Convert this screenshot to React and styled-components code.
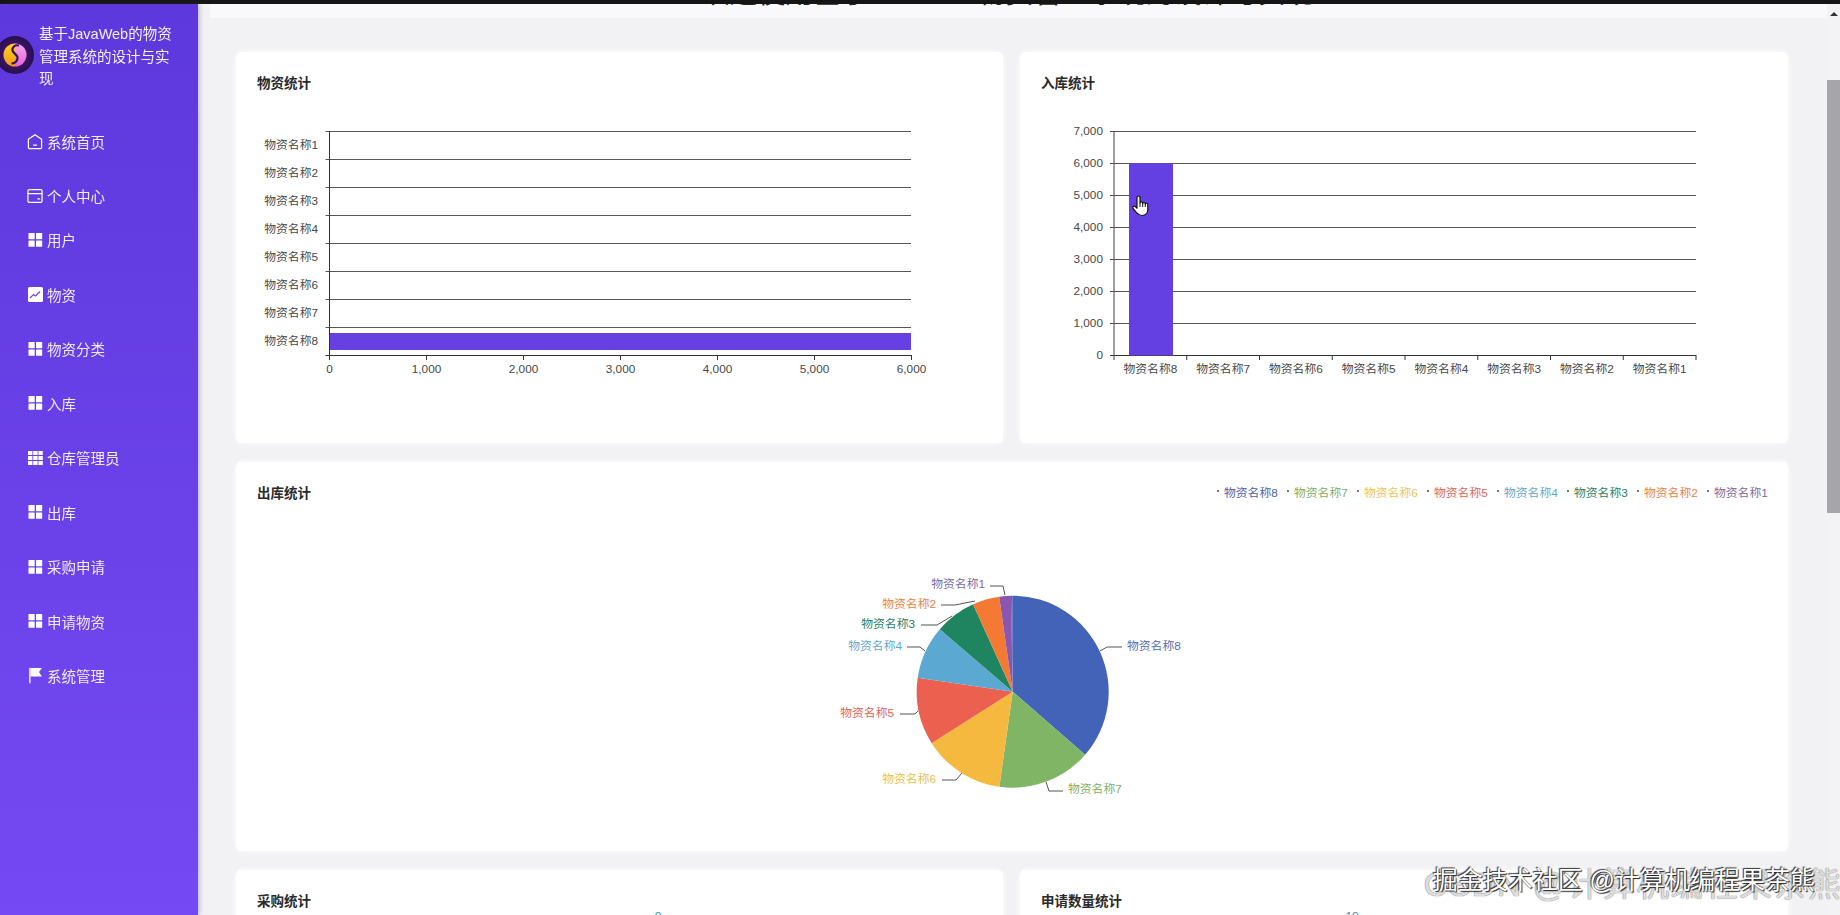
import React from "react";
import styled, { createGlobalStyle } from "styled-components";

const Global = createGlobalStyle`
  html, body { margin: 0; padding: 0; height: 100%; overflow: hidden; background: #f2f2f5; }
  body { font-family: "Liberation Sans", "Noto Sans CJK SC", sans-serif; }
  #root { height: 100%; }
  svg text { font-family: "Liberation Sans", "Noto Sans CJK SC", sans-serif; }
`;

const Page = styled.div`
  width: 1840px;
  height: 915px;
  overflow: hidden;
  display: flex;
  flex-direction: column;
  position: relative;
  filter: blur(0.45px);
`;
const TopEdge = styled.div`
  height: 4px;
  flex: none;
  background: #151515;
`;
const Body = styled.div`
  flex: 1;
  min-height: 0;
  display: flex;
`;
const Sidebar = styled.aside`
  width: 198px;
  flex: none;
  background: linear-gradient(180deg, #5d38dc 0%, #7549f3 100%);
  box-shadow: 2px 0 4px rgba(80, 80, 110, 0.3);
  position: relative;
  z-index: 1;
`;
const Brand = styled.div`
  display: flex;
  align-items: center;
  gap: 5px;
  height: 110px;
  margin-left: -4px;
  padding-bottom: 4px;
  box-sizing: border-box;
`;
const LogoSvg = styled.svg`
  flex: none;
  margin-bottom: 4px;
`;
const BrandTitle = styled.div`
  width: 138px;
  color: #f4efff;
  font-size: 14.5px;
  line-height: 22.5px;
`;
const Menu = styled.nav`
  display: flex;
  flex-direction: column;
`;
const MenuItem = styled.div`
  display: flex;
  align-items: center;
  gap: 4px;
  height: 54.5px;
  padding-left: 27px;
  margin-bottom: ${(p) => (p.$pull ? "-10.5px" : "0")};
  color: #f1ebff;
  font-size: 14.5px;
  flex: none;
`;
const IconSlot = styled.span`
  width: 16px;
  height: 17px;
  display: flex;
  align-items: center;
  justify-content: center;
  flex: none;
`;
const Main = styled.main`
  flex: 1;
  min-width: 0;
  display: flex;
  flex-direction: column;
  background: #f2f2f5;
  overflow: hidden;
`;
const Banner = styled.header`
  height: 14px;
  margin-left: 12px;
  flex: none;
  overflow: hidden;
  background: #f9f9fb;
  display: flex;
  justify-content: center;
  gap: 108px;
  padding-right: 22px;
  color: #222;
  font-size: 28px;
  line-height: 28px;
`;
const BannerText = styled.span`
  margin-top: -24px;
  height: 28px;
  white-space: nowrap;
`;
const Content = styled.div`
  display: grid;
  grid-template-columns: 767px 768px;
  grid-template-rows: 391px 389px 60px;
  column-gap: 17px;
  row-gap: 19px;
  padding: 34px 0 0 38px;
`;
const Card = styled.section`
  background: #fff;
  border-radius: 6px;
  box-shadow: 0 0 5px 1px rgba(252, 252, 253, 0.9);
  position: relative;
  overflow: hidden;
  grid-column: ${(p) => (p.$wide ? "1 / span 2" : "auto")};
`;
const CardHead = styled.div`
  display: flex;
  justify-content: space-between;
  align-items: center;
  padding: 24px 11px 0 21px;
  height: 16px;
`;
const CardTitle = styled.h3`
  margin: 0;
  font-size: 13.5px;
  font-weight: 700;
  color: #2a2a2a;
  line-height: 16px;
`;
const Legend = styled.div`
  display: flex;
  margin-top: -6px;
`;
const LegendItem = styled.span`
  display: flex;
  align-items: center;
  gap: 5px;
  width: 70px;
  font-size: 11.8px;
  color: ${(p) => p.$color};
  white-space: nowrap;
  &::before {
    content: "";
    width: 2px;
    height: 2px;
    border-radius: 50%;
    background: #444;
  }
`;
const ChartSvg = styled.svg`
  position: absolute;
  left: 0;
  top: 0;
  width: 100%;
  height: 100%;
  overflow: visible;
`;
const Scrollbar = styled.div`
  width: 13px;
  flex: none;
  background: #f3f3f5;
  display: flex;
  flex-direction: column;
  align-items: center;
  padding-top: 8px;
  box-sizing: border-box;
`;
const ScrollArrow = styled.div`
  width: 0;
  height: 0;
  flex: none;
  border-left: 4px solid transparent;
  border-right: 4px solid transparent;
  border-bottom: 4px solid #333;
  margin-bottom: 64px;
`;
const Thumb = styled.div`
  width: 100%;
  height: 433px;
  flex: none;
  background: #a6a5a9;
`;
const Watermark = styled.div`
  position: absolute;
  right: 0;
  bottom: 0;
  width: 560px;
  height: 60px;
  pointer-events: none;
  z-index: 3;
`;
const WaterBack = styled.div`
  position: absolute;
  right: -2px;
  top: 13px;
  font-size: 33px;
  line-height: 34px;
  letter-spacing: 1.3px;
  white-space: nowrap;
  color: rgba(255, 255, 255, 0.75);
  text-shadow: 0 0 1px #777, 0 0 1px #888;
`;
const WaterFront = styled.div`
  position: absolute;
  right: 25px;
  top: 10px;
  font-size: 25px;
  line-height: 30px;
  white-space: nowrap;
  color: #fff;
  text-shadow: 1px 1px 1px #222, -1px -1px 1px #333;
`;

const names = [8, 7, 6, 5, 4, 3, 2, 1].map((n) => `物资名称${n}`);
const axis = "#333";
const labelFill = "#484848";

const LogoMark = () => (
  <LogoSvg width="38" height="38" viewBox="0 0 38 38">
    <defs>
      <linearGradient id="lgY" x1="0" y1="0" x2="0" y2="1">
        <stop offset="0" stopColor="#ffd21f" />
        <stop offset="1" stopColor="#f59b1a" />
      </linearGradient>
      <linearGradient id="lgP" x1="0" y1="0" x2="0" y2="1">
        <stop offset="0" stopColor="#f7a8ea" />
        <stop offset="1" stopColor="#e563d8" />
      </linearGradient>
      <radialGradient id="lgB" cx="0.5" cy="0.5" r="0.5">
        <stop offset="0.6" stopColor="#3a1466" />
        <stop offset="1" stopColor="#2a0e4e" />
      </radialGradient>
    </defs>
    <circle cx="19" cy="19" r="19" fill="url(#lgB)" />
    <path d="M19 7.5a11.5 11.5 0 0 0 0 23z" fill="url(#lgY)" />
    <path d="M19 7.5a11.5 11.5 0 0 1 0 23z" fill="url(#lgP)" />
    <path d="M23 9.5c-4-1-7 1.500-6.500 5 .4 3 5.500 4 5 8-.3 2.500-2.500 5-6 5" fill="none" stroke="#35125c" strokeWidth="2.2" />
  </LogoSvg>
);

const HomeIcon = () => (
  <svg width="17" height="17" viewBox="0 0 17 17" fill="none" stroke="#fff" strokeWidth="1.3" strokeLinejoin="round">
    <path d="M8.5 1.2 15.5 6.200V15a1 1 0 0 1-1 1h-12a1 1 0 0 1-1-1V6.200z" />
    <path d="M6.500 12q2 1.200 4 0" />
  </svg>
);
const CardIcon = () => (
  <svg width="17" height="16" viewBox="0 0 17 16" fill="none" stroke="#fff" strokeWidth="1.3">
    <rect x="1" y="1.200" width="15" height="13.600" rx="1.500" />
    <path d="M1 5.500h15M11 11h3" />
  </svg>
);
const Grid = () => (
  <svg width="15" height="14" viewBox="0 0 15 14" fill="#fff">
    <rect x="0.500" y="0" width="6.200" height="6.200" rx="0.500" />
    <rect x="8" y="0" width="6.200" height="6.200" rx="0.500" />
    <rect x="0.500" y="7.600" width="6.200" height="6.200" rx="0.500" />
    <rect x="8" y="7.600" width="6.200" height="6.200" rx="0.500" />
  </svg>
);
const ChartIcon = () => (
  <svg width="15" height="15" viewBox="0 0 15 15">
    <rect width="15" height="15" rx="1.500" fill="#fff" />
    <path d="M2 11l3.500-3.500 2 1.500L12 4.500" fill="none" stroke="#6a44ea" strokeWidth="1.100" />
  </svg>
);
const TableIcon = () => (
  <svg width="15" height="14" viewBox="0 0 15 14" fill="#fff">
    {[0, 5.2, 10.4].flatMap((x) =>
      [0, 5, 10].map((y) => <rect key={`${x}-${y}`} x={x} y={y} width="4.400" height="4" />)
    )}
  </svg>
);
const FlagIcon = () => (
  <svg width="15" height="17" viewBox="0 0 15 17" fill="#fff">
    <rect x="1.200" y="0.800" width="1.300" height="15.500" />
    <path d="M2.500 1H14l-3 4 3 4.500H2.500z" />
  </svg>
);

const menu = [
  { label: "系统首页", icon: <HomeIcon /> },
  { label: "个人中心", icon: <CardIcon />, pull: true },
  { label: "用户", icon: <Grid /> },
  { label: "物资", icon: <ChartIcon /> },
  { label: "物资分类", icon: <Grid /> },
  { label: "入库", icon: <Grid /> },
  { label: "仓库管理员", icon: <TableIcon /> },
  { label: "出库", icon: <Grid /> },
  { label: "采购申请", icon: <Grid /> },
  { label: "申请物资", icon: <Grid /> },
  { label: "系统管理", icon: <FlagIcon /> },
];

const BarHorizontal = () => {
  const ox = 93.5;
  const grid = [79.5, 107.5, 135.5, 163.5, 191.5, 219.5, 247.5, 275.5];
  const rowNames = [1, 2, 3, 4, 5, 6, 7, 8].map((n) => `物资名称${n}`);
  const ticks = [0, 1, 2, 3, 4, 5, 6];
  return (
    <ChartSvg>
      {grid.map((y) => (
        <line key={y} x1={ox - 4} x2={675} y1={y} y2={y} stroke="#555" />
      ))}
      <rect x={ox} y={281} width={581.5} height={17} fill="#6640e2" />
      <line x1={ox} x2={ox} y1={79} y2={307} stroke={axis} />
      <line x1={ox - 4} x2={675} y1={303.5} y2={303.5} stroke={axis} />
      {rowNames.map((t, i) => (
        <text key={t} x={82} y={grid[i] + 17} textAnchor="end" fontSize="11.8" fill={labelFill}>
          {t}
        </text>
      ))}
      {ticks.map((n, i) => {
        const x = ox + i * 97;
        return (
          <g key={n}>
            <line x1={x} x2={x} y1={303} y2={308} stroke={axis} />
            <text x={x} y={321} textAnchor="middle" fontSize="11.8" fill={labelFill}>
              {n === 0 ? "0" : `${n},000`}
            </text>
          </g>
        );
      })}
    </ChartSvg>
  );
};

const BarVertical = () => {
  const ox = 94;
  const rows = [7, 6, 5, 4, 3, 2, 1, 0];
  const step = 32;
  const top = 79.5;
  return (
    <ChartSvg>
      {rows.map((n, i) => {
        const y = top + i * step;
        return (
          <g key={n}>
            <line x1={ox - 4} x2={676} y1={y} y2={y} stroke={n === 0 ? axis : "#555"} />
            <text x={83} y={y + 3} textAnchor="end" fontSize="11.8" fill={labelFill}>
              {n === 0 ? "0" : `${n},000`}
            </text>
          </g>
        );
      })}
      <rect x={109} y={111} width={44} height={192.5} fill="#6440e3" />
      <line x1={ox} x2={ox} y1={79} y2={308} stroke="#444" />
      {names.map((t, i) => {
        const x = ox + i * 72.75;
        return (
          <g key={t}>
            <line x1={x + 72.75} x2={x + 72.75} y1={303} y2={308} stroke={axis} />
            <text x={x + 36.4} y={321} textAnchor="middle" fontSize="11.8" fill={labelFill}>
              {t}
            </text>
          </g>
        );
      })}
      <g transform="translate(111 142)">
        <path
          d="M6 3.500c0-2 3-2 3 0V9c0-1.600 2.700-1.600 2.700 0v.6c0-1.400 2.600-1.400 2.600 0v.6c0-1.300 2.500-1.300 2.500.2v5.100c0 3.600-2.500 6-5.800 6-2.600 0-4-1-5.300-2.600L2 14.500c-1-1.500 1-3 2.300-1.900L6 14.200z"
          fill="#fff"
          stroke="#111"
          strokeWidth="1.200"
          strokeLinejoin="round"
        />
        <path d="M9 9v4M11.700 9.600V13M14.300 10.200V13" stroke="#111" strokeWidth="1" fill="none" />
      </g>
    </ChartSvg>
  );
};

const colors = {
  8: "#4363b8",
  7: "#80b566",
  6: "#f6b93f",
  5: "#ec6050",
  4: "#5ba8d2",
  3: "#1e8560",
  2: "#f47a34",
  1: "#8b55b0",
};

const PieChart = () => {
  const cx = 776.7;
  const cy = 229.7;
  const r = 96;
  const slices = [
    [8, 0, 131],
    [7, 131, 188],
    [6, 188, 237.6],
    [5, 237.6, 278.3],
    [4, 278.3, 310.6],
    [3, 310.6, 335.6],
    [2, 335.6, 351.9],
    [1, 351.9, 359],
    [8, 359, 360],
  ];
  const pt = (a) => {
    const t = (a * Math.PI) / 180;
    return [cx + r * Math.sin(t), cy - r * Math.cos(t)];
  };
  const labels = [
    [8, "1100,651 1107,647 1122,647", 1127, 650, "start", "#5a6ca8"],
    [7, "1046,782 1049,791 1063,791", 1068, 793, "start", "#7fae68"],
    [6, "962,773 956,780 942,780", 936, 783, "end", "#e9c04f"],
    [5, "918,711 915,714 900,714", 894, 717, "end", "#dd6358"],
    [4, "925,651 920,647 907,647", 902, 650, "end", "#62a8cc"],
    [3, "952,616 937,625 921,625", 915, 628, "end", "#2a8066"],
    [2, "975,601 955,605 941,605", 936, 608, "end", "#e8824a"],
    [1, "1005,595 1003,586 990,586", 985, 588, "end", "#7c6a9e"],
  ];
  return (
    <ChartSvg>
      {slices.map(([n, a, b], i) => {
        const [x1, y1] = pt(a);
        const [x2, y2] = pt(b);
        const large = b - a > 180 ? 1 : 0;
        return (
          <path
            key={i}
            d={`M${cx} ${cy}L${x1} ${y1}A${r} ${r} 0 ${large} 1 ${x2} ${y2}Z`}
            fill={colors[n]}
          />
        );
      })}
      <g transform="translate(-236 -462)">
        {labels.map(([n, pts, x, y, anchor, fill]) => (
          <g key={n}>
            <polyline points={pts} fill="none" stroke="#555" />
            <text x={x} y={y} textAnchor={anchor} fontSize="11.8" fill={fill}>
              {`物资名称${n}`}
            </text>
          </g>
        ))}
      </g>
    </ChartSvg>
  );
};

const TopTick = ({ x, children }) => (
  <ChartSvg>
    <text x={x} y={50} textAnchor="middle" fontSize="11.8" fill="#3a90b8">
      {children}
    </text>
  </ChartSvg>
);

const legendColors = {
  8: "#4a5fa8",
  7: "#7fae68",
  6: "#e9c45e",
  5: "#d9655a",
  4: "#62a8cc",
  3: "#2a8066",
  2: "#e8824a",
  1: "#7c6a9e",
};

export default function App() {
  return (
    <Page>
      <Global />
      <TopEdge />
      <Body>
        <Sidebar>
          <Brand>
            <LogoMark />
            <BrandTitle>基于JavaWeb的物资管理系统的设计与实现</BrandTitle>
          </Brand>
          <Menu>
            {menu.map((m) => (
              <MenuItem key={m.label} $pull={m.pull}>
                <IconSlot>{m.icon}</IconSlot>
                {m.label}
              </MenuItem>
            ))}
          </Menu>
        </Sidebar>
        <Main>
          <Banner>
            <BannerText>欢迎使用基于</BannerText>
            <BannerText>物资管理系统的设计与实现</BannerText>
          </Banner>
          <Content>
            <Card>
              <CardHead>
                <CardTitle>物资统计</CardTitle>
              </CardHead>
              <BarHorizontal />
            </Card>
            <Card>
              <CardHead>
                <CardTitle>入库统计</CardTitle>
              </CardHead>
              <BarVertical />
            </Card>
            <Card $wide>
              <CardHead>
                <CardTitle>出库统计</CardTitle>
                <Legend>
                  {names.map((t, i) => (
                    <LegendItem key={t} $color={legendColors[8 - i]}>
                      {t}
                    </LegendItem>
                  ))}
                </Legend>
              </CardHead>
              <PieChart />
            </Card>
            <Card>
              <CardHead>
                <CardTitle>采购统计</CardTitle>
              </CardHead>
              <TopTick x={422}>0</TopTick>
            </Card>
            <Card>
              <CardHead>
                <CardTitle>申请数量统计</CardTitle>
              </CardHead>
              <TopTick x={332}>10</TopTick>
            </Card>
          </Content>
        </Main>
        <Scrollbar>
          <ScrollArrow />
          <Thumb />
        </Scrollbar>
      </Body>
      <Watermark>
        <WaterBack>CSDN @计算机编程果茶熊</WaterBack>
        <WaterFront>掘金技术社区 @计算机编程果茶熊</WaterFront>
      </Watermark>
    </Page>
  );
}
